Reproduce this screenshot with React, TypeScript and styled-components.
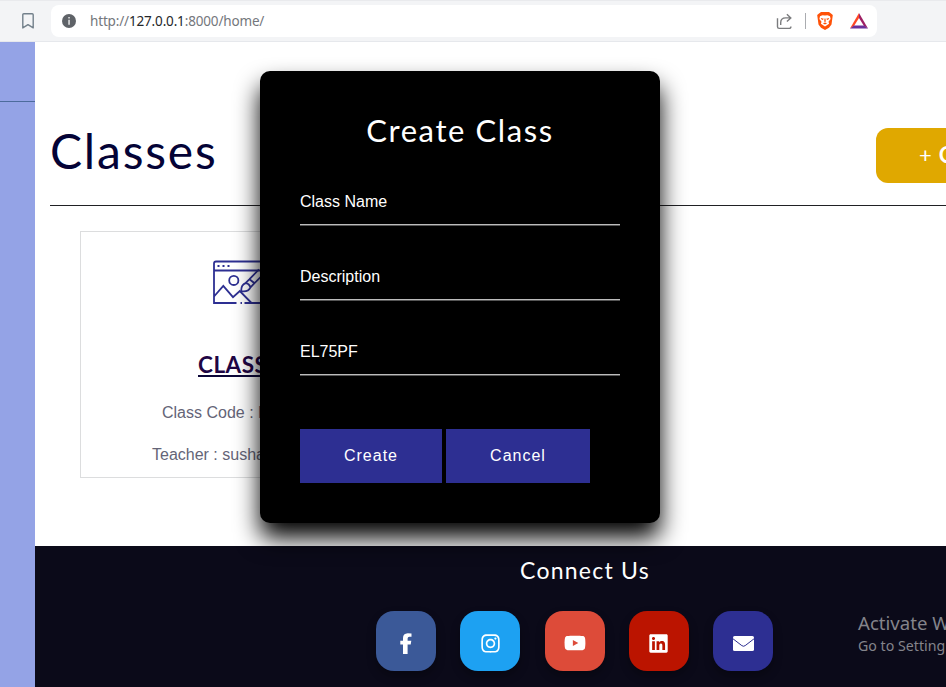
import React from 'react';
import styled, { createGlobalStyle } from 'styled-components';
import { FaInstagram, FaYoutube, FaLinkedin } from 'react-icons/fa';

const GlobalStyle = createGlobalStyle`
  * { box-sizing: border-box; }
  body { margin: 0; overflow: hidden; background: #fff; font-family: "Liberation Sans", Arial, sans-serif; }
  h1, h2, h3, p { margin: 0; font-weight: 400; }
`;

const Screen = styled.div`
  position: relative;
  width: 946px;
  height: 687px;
  overflow: hidden;
  display: flex;
  flex-direction: column;
`;

const BrowserBar = styled.header`
  height: 42px;
  flex: none;
  display: flex;
  align-items: center;
  background: #f3f4f6;
  border-top: 1px solid #e9eaed;
  border-bottom: 1px solid #e6e8ec;
  padding-left: 21px;
`;

const AddressBar = styled.div`
  width: 826px;
  height: 32px;
  margin-left: 16px;
  border-radius: 8px;
  background: #fff;
  display: flex;
  align-items: center;
  padding: 0 9px 0 11px;
`;

const Url = styled.span`
  flex: 1;
  margin-left: 14px;
  font: 13.5px "Noto Sans", sans-serif;
  letter-spacing: -0.16px;
  color: #74777c;
  b { font-weight: 400; color: #25272a; }
`;

const Separator = styled.i`
  width: 1px;
  height: 16px;
  margin: 0 11px 0 12px;
  background: #aaacb0;
`;

const TriangleSlot = styled.span`
  display: flex;
  margin-left: 17px;
`;

const Body = styled.div`
  flex: 1;
  display: flex;
  min-height: 0;
`;

const Sidebar = styled.aside`
  width: 35px;
  flex: none;
  background: #94a3e6;
`;

const SidebarRule = styled.div`
  height: 60px;
  border-bottom: 1px solid #4c6b9c;
`;

const Main = styled.main`
  flex: 1;
  min-width: 0;
  display: flex;
  flex-direction: column;
`;

const Content = styled.section`
  height: 504px;
  flex: none;
  padding-left: 15px;
`;

const TitleRow = styled.div`
  height: 164px;
  display: flex;
  align-items: flex-start;
  justify-content: space-between;
  padding-top: 86px;
  border-bottom: 1px solid #202124;
`;

const PageTitle = styled.h1`
  margin-top: -1px;
  font: 400 48px/48px Lato, sans-serif;
  letter-spacing: 1.8px;
  color: #040336;
`;

const AddButton = styled.button`
  width: 70px;
  height: 55px;
  flex: none;
  border: 0;
  border-radius: 12px 0 0 12px;
  background: #e0a800;
  color: #fff;
  padding: 0 0 2px 43px;
  display: flex;
  align-items: center;
  gap: 7px;
  overflow: hidden;
  font: 400 22px Lato, sans-serif;
  b { font-size: 22px; }
`;

const ClassCard = styled.article`
  width: 316px;
  height: 247px;
  margin: 25px 0 0 30px;
  border: 1px solid #dcddde;
  overflow: hidden;
  white-space: nowrap;
`;

const CardPicture = styled.div`
  height: 116px;
  padding: 28px 0 0 131px;
`;

const CardTitle = styled.h2`
  height: 48px;
  padding-left: 117px;
  font: 700 22.5px/34px Lato, sans-serif;
  letter-spacing: 0.5px;
  color: #1f0645;
  span { border-bottom: 2px solid #0c0638; display: inline-block; height: 29px; }
`;

const CardLine = styled.p<{ $indent: number }>`
  height: 42px;
  padding-left: ${(p) => p.$indent}px;
  font-size: 16px;
  line-height: 33px;
  color: #646477;
`;

const Footer = styled.footer`
  flex: 1;
  background: #0b0a19;
  display: grid;
  grid-template-columns: 341px 397px 1fr;
  grid-template-rows: 65px 1fr;
`;

const FooterTitle = styled.h3`
  grid-column: 2;
  padding: 9px 0 0 144px;
  font: 400 23px/30px Lato, sans-serif;
  letter-spacing: 1.25px;
  color: #fff;
`;

const Socials = styled.div`
  grid-column: 2;
  display: flex;
  justify-content: space-between;
`;

const SocialTile = styled.a<{ $color: string }>`
  width: 60px;
  height: 60px;
  border-radius: 18px;
  background: ${(p) => p.$color};
  color: #fff;
  display: flex;
  align-items: center;
  justify-content: center;
  padding-top: 4px;
  font-size: 21px;
  box-shadow: 0 5px 10px rgba(0, 0, 0, 0.3);
`;

const Activation = styled.div`
  grid-column: 3;
  padding: 0 0 0 85px;
  font-family: "Noto Sans", sans-serif;
  font-size: 14.2px;
  line-height: 22px;
  color: #84848b;
  white-space: nowrap;
  overflow: hidden;
  strong { display: block; font-size: 18.6px; line-height: 24px; font-weight: 400; }
`;

const Modal = styled.form`
  position: absolute;
  left: 260px;
  top: 71px;
  width: 400px;
  height: 452px;
  padding: 40px;
  border-radius: 10px;
  background: #000;
  color: #fff;
  box-shadow: 0 15px 25px #000;
`;

const ModalTitle = styled.h2`
  height: 71px;
  text-align: center;
  white-space: nowrap;
  font: 400 31px/38px Lato, sans-serif;
  letter-spacing: 1.6px;
`;

const Field = styled.input`
  display: block;
  width: 100%;
  height: 43px;
  margin: 0 0 32px;
  padding: 0 0 3px;
  border: 0;
  border-bottom: 1px solid #bcbcbc;
  box-shadow: 0 1px #555;
  background: transparent;
  outline: none;
  color: #fff;
  font: 16px "Liberation Sans", Arial, sans-serif;
  &::placeholder { color: #fff; opacity: 1; }
`;

const Actions = styled.div`
  display: flex;
  gap: 4px;
  margin-top: 54px;
`;

const ActionButton = styled.button<{ $width: number }>`
  width: ${(p) => p.$width}px;
  height: 54px;
  padding: 0;
  border: 0;
  background: #2d2f92;
  color: #fff;
  font: 16px "Liberation Sans", Arial, sans-serif;
  letter-spacing: 1px;
`;

const BookmarkIcon = () => (
  <svg width="14" height="18" viewBox="0 0 14 18" fill="none" stroke="#73808b" strokeWidth="1.4" strokeLinejoin="round">
    <path d="M2.8 1.7h8.4q1 0 1 1v13.2L7 12.6l-5.2 3.3V2.7q0-1 1-1Z" />
  </svg>
);

const InfoIcon = () => (
  <svg width="14" height="14" viewBox="0 0 14 14">
    <circle cx="7" cy="7" r="7" fill="#5f6368" />
    <path d="M6.3 3h1.5v1.5H6.3zM6.3 5.7h1.5v5H6.3z" fill="#e6e7e8" />
  </svg>
);

const ShareIcon = () => (
  <svg width="17" height="17" viewBox="0 0 17 17" fill="none" stroke="#7b7c7e" strokeWidth="1.4">
    <path d="M1.5 5.2v8.5q0 1.7 1.7 1.7h9.9q1.8 0 1.8-2M4.7 12V9.7q0-4.8 5-4.8h5M10.9 1.3l3.9 3.6-3.9 3.7" />
  </svg>
);

const LionIcon = () => (
  <svg width="16" height="18" viewBox="0 0 16 18">
    <path d="m4 0-2 1.6L.2 3l.3 2.3 1 7.2L4 15.8 8 18l4-2.2 2.5-3.3 1-7.2.3-2.3L14 1.6 12 0Z" fill="#ff5208" />
    <path d="M3 4.3 5.5 3.2 8 3.6l2.5-.4L13 4.3l.6 2.6-2.1 2.9.6 2L8 14.6l-4.1-2.8.6-2-2.1-2.9Z" fill="#fff" />
    <path d="m3.8 6.1 3 .6-1 1.2-1.5-.7zm8.4 0-3 .6 1 1.2 1.5-.7zM7.5 6.6h1l.3 2.8-.8.7-.8-.7zM5.9 11.2l2.1-.7 2.1.7L8 12.4z" fill="#ff5208" />
  </svg>
);

const TriangleIcon = () => (
  <svg width="18" height="16" viewBox="0 0 18 16">
    <path d="M9 0v5L4 13l-4 2.6Z" fill="#ff4724" />
    <path d="M9 0v5l5 8 4 2.6Z" fill="#9e1f63" />
    <path d="m0 15.6 4-3.1h10l4 3.1Z" fill="#6a309a" />
  </svg>
);

const FacebookIcon = () => (
  <svg width="13" height="21" viewBox="0 0 13 21" fill="#fff">
    <path d="M3 21V11.4H.3V7.7H3V5.1Q3 .4 7.8.2q2 0 3.7.3v3.2H9.4Q7.6 3.7 7.6 5.6v2.1h3.7l-.6 3.7H7.6V21Z" />
  </svg>
);

const MailIcon = () => (
  <svg width="21" height="15" viewBox="0 0 21 15">
    <rect width="21" height="15" rx="1.6" fill="#fff" />
    <path d="M0 2.8 8.8 9.6q1.7 1.3 3.4 0L21 2.8" fill="none" stroke="#2d2f92" strokeWidth="1" />
  </svg>
);

const DrawingIcon = () => (
  <svg width="54" height="46" viewBox="0 0 54 46" fill="none" stroke="#2d2f92" strokeWidth="1.8">
    <path d="M24.5 43H2V3.5q0-2 2-2h50M2 10.5h52M2 36.5l9.3-10.7L21 37.2l6.8-6.2L39.5 43M32.5 43H54M28.5 43H30" />
    <path d="M5.5 6h2M10.5 6h2M15.5 6h2" />
    <circle cx="21.8" cy="20.4" r="4.6" />
    <path d="M29.3 31.2q-.5-6 4.2-8 3.5.3 5 4.2-2.4 5-9.2 3.8ZM33.5 23.2l4-4 5 4-4 4.2M37.5 19.2 47 9.4M42.5 23.2 54 11.7" />
  </svg>
);

const socials = [
  { name: 'Facebook', color: '#3b5998', icon: <FacebookIcon /> },
  { name: 'Instagram', color: '#1da1f2', icon: <FaInstagram /> },
  { name: 'YouTube', color: '#dd4b39', icon: <FaYoutube size={22} /> },
  { name: 'LinkedIn', color: '#bb1400', icon: <FaLinkedin /> },
  { name: 'Email', color: '#2d2f92', icon: <MailIcon /> },
];

export default function App() {
  return (
    <>
      <GlobalStyle />
      <Screen>
        <BrowserBar>
          <BookmarkIcon />
          <AddressBar>
            <InfoIcon />
            <Url>http://<b>127.0.0.1</b>:8000/home/</Url>
            <ShareIcon />
            <Separator />
            <LionIcon />
            <TriangleSlot><TriangleIcon /></TriangleSlot>
          </AddressBar>
        </BrowserBar>
        <Body>
          <Sidebar><SidebarRule /></Sidebar>
          <Main>
            <Content>
              <TitleRow>
                <PageTitle>Classes</PageTitle>
                <AddButton><span>+</span><b>C</b></AddButton>
              </TitleRow>
              <ClassCard>
                <CardPicture><DrawingIcon /></CardPicture>
                <CardTitle><span>CLASS</span></CardTitle>
                <CardLine $indent={81}>Class Code : E</CardLine>
                <CardLine $indent={71}>Teacher : susha</CardLine>
              </ClassCard>
            </Content>
            <Footer>
              <FooterTitle>Connect Us</FooterTitle>
              <Socials>
                {socials.map((s) => (
                  <SocialTile key={s.name} $color={s.color} aria-label={s.name}>{s.icon}</SocialTile>
                ))}
              </Socials>
              <Activation><strong>Activate W</strong>Go to Setting</Activation>
            </Footer>
          </Main>
        </Body>
        <Modal onSubmit={(e) => e.preventDefault()}>
          <ModalTitle>Create Class</ModalTitle>
          <Field placeholder="Class Name" />
          <Field placeholder="Description" />
          <Field defaultValue="EL75PF" />
          <Actions>
            <ActionButton $width={142}>Create</ActionButton>
            <ActionButton type="button" $width={144}>Cancel</ActionButton>
          </Actions>
        </Modal>
      </Screen>
    </>
  );
}
